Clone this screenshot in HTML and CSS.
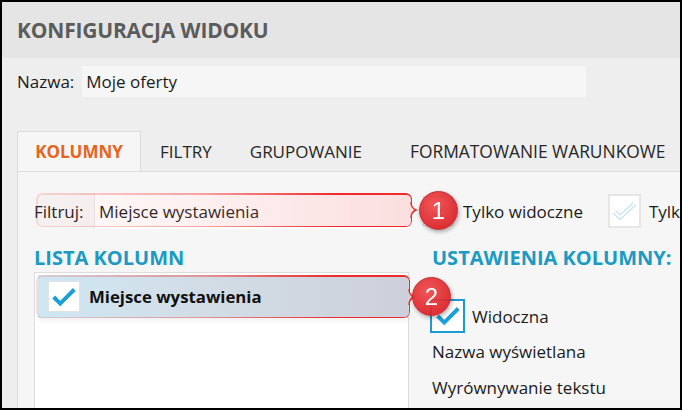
FILE: index.html
```html
<!DOCTYPE html>
<html lang="pl">
<head>
  <meta charset="UTF-8" />
  <title>Konfiguracja widoku</title>
  <link rel="stylesheet" href="styles.css">
</head>
<body>
  <div class="window">
    <!-- Title bar -->
    <header class="title-bar">
      <h1>KONFIGURACJA WIDOKU</h1>
    </header>

    <!-- View name -->
    <div class="name-row">
      <span class="label">Nazwa:</span>
      <div class="text-field name-field">Moje oferty</div>
    </div>

    <!-- Tabs -->
    <nav class="tabs">
      <span class="tab active">KOLUMNY</span>
      <span class="tab">FILTRY</span>
      <span class="tab">GRUPOWANIE</span>
      <span class="tab tab-last">FORMATOWANIE WARUNKOWE</span>
    </nav>

    <section class="tab-panel">
      <div class="filter-row">
        <span class="label">Filtruj:</span>
        <div class="text-field filter-field">Miejsce wystawienia</div>
        <span class="check hidden-check">
          <svg viewBox="0 0 32 32" width="24" height="24"><path d="M6 17l6 6 14-14" fill="none" stroke="#9a9a9a" stroke-width="2"/></svg>
        </span>
        <span class="opt-text">Tylko widoczne</span>
        <span class="check faint-check">
          <svg viewBox="0 0 32 32" width="30" height="30"><path d="M5 17l6 6 16-15" fill="none" stroke="#bfe3f3" stroke-width="5" stroke-linejoin="round"/><path d="M5 17l6 6 16-15" fill="none" stroke="#fff" stroke-width="2.4" stroke-linejoin="round"/></svg>
        </span>
        <span class="opt-text">Tylko zaznaczone</span>

        <div class="callout callout-filter">
          <svg class="brace" viewBox="0 0 8 16" width="8" height="16"><path d="M1 0 Q1 6 6 8 Q1 10 1 16" fill="#f8e4e4" stroke="#ef2a2a" stroke-width="1.4"/></svg>
        </div>
        <span class="badge badge-one">1</span>
      </div>

      <div class="columns">
        <div class="col-list">
          <h2>LISTA KOLUMN</h2>
          <div class="list-box">
            <div class="list-item selected">
              <span class="check item-check">
                <svg viewBox="0 0 32 32" width="30" height="30"><path d="M5 16l7 7 15-15" fill="none" stroke="#1a9fd9" stroke-width="4.2"/></svg>
              </span>
              <span class="item-text">Miejsce wystawienia</span>
              <div class="callout callout-item">
                <svg class="brace" viewBox="0 0 8 16" width="8" height="16"><path d="M1 0 Q1 6 6 8 Q1 10 1 16" fill="#cdd0da" stroke="#ef2a2a" stroke-width="1.4"/></svg>
              </div>
            </div>
          </div>
        </div>

        <div class="col-settings">
          <h2>USTAWIENIA KOLUMNY:</h2>
          <div class="setting check-row">
            <span class="check blue-check">
              <svg viewBox="0 0 32 32" width="30" height="30"><path d="M5 16l7 7 15-15" fill="none" stroke="#1a9fd9" stroke-width="4.2"/></svg>
            </span>
            <span>Widoczna</span>
          </div>
          <div class="setting">Nazwa wyświetlana</div>
          <div class="setting">Wyrównywanie tekstu</div>
          <span class="badge badge-two">2</span>
        </div>
      </div>
    </section>
  </div>
</body>
</html>
```

FILE: styles.css
```css
body {
  margin: 0;
  padding: 0;
  font-family: "Open Sans", "Noto Sans", sans-serif;
  color: #1b1b1b;
}

.window {
  width: 682px;
  height: 410px;
  box-sizing: border-box;
  border: 2px solid #000;
  background: #eeeeee;
  overflow: hidden;
  display: flex;
  flex-direction: column;
}

/* Title bar */
.title-bar {
  height: 56px;
  flex: none;
  background: #e5e5e5;
  display: flex;
  align-items: center;
  padding-left: 15px;
}
.title-bar h1 {
  margin: 0;
  font-size: 21px;
  font-weight: 700;
  color: #5c5c5c;
  letter-spacing: -0.2px;
}

/* Name row */
.name-row {
  display: flex;
  align-items: center;
  padding: 8px 0 0 15px;
  gap: 8px;
}
.label {
  font-size: 17px;
}
.text-field {
  box-sizing: border-box;
  display: flex;
  align-items: center;
  font-size: 17px;
  padding-left: 4px;
}
.name-field {
  width: 504px;
  height: 31px;
  background: #f6f6f6;
}

/* Tabs */
.tabs {
  display: flex;
  margin: 34px 0 0 15px;
  height: 40px;
  flex: none;
}
.tab {
  flex: none;
  display: flex;
  align-items: center;
  padding: 0 19px;
  font-size: 17px;
  color: #262626;
  white-space: nowrap;
}
.tab.tab-last {
  padding-left: 29px;
  font-size: 17.4px;
}
.tab.active {
  width: 124px;
  box-sizing: border-box;
  justify-content: center;
  padding: 0;
  background: #f6f6f6;
  border: 1px solid #dcdcdc;
  border-bottom: none;
  color: #e8641b;
  font-weight: 700;
}

.tab-panel {
  flex: 1;
  margin-left: 15px;
  background: #f6f6f6;
  border-left: 1px solid #dcdcdc;
  border-top: 1px solid #dcdcdc;
  padding: 21px 0 0 16px;
}

/* Filter row */
.filter-row {
  position: relative;
  display: flex;
  align-items: center;
  height: 36px;
}
.filter-row > * {
  flex: none;
}
.filter-row .label {
  width: 60px;
}
.filter-field {
  width: 316px;
  height: 36px;
  background: #fff;
  border-left: 1px solid #e6e6e6;
}
.check {
  box-sizing: border-box;
  display: flex;
  align-items: center;
  justify-content: center;
  background: #fff;
  flex: none;
}
.hidden-check {
  width: 30px;
  height: 30px;
  margin-left: 13px;
  border: 1px solid #d4d4d4;
}
.faint-check {
  width: 33px;
  height: 34px;
  margin-left: 25px;
  border: 2px solid #e6e6e6;
}
.opt-text {
  font-size: 17px;
  margin-left: 8px;
  white-space: nowrap;
}
.hidden-check + .opt-text {
  margin-left: 10px;
}

/* Callout highlights */
.callout {
  position: absolute;
  border-radius: 6px;
  box-sizing: border-box;
}
.callout::before {
  content: "";
  position: absolute;
  inset: 0;
  border-radius: 6px;
  padding: 1.5px;
  background: linear-gradient(to right, rgba(240, 60, 60, 0.15), rgba(240, 60, 60, 0.45) 45%, #ef2a2a 80%);
  -webkit-mask: linear-gradient(#000 0 0) content-box, linear-gradient(#000 0 0);
  -webkit-mask-composite: xor;
  mask-composite: exclude;
}
.callout .brace {
  position: absolute;
  right: -6px;
  top: 50%;
  margin-top: -8px;
}
.callout-filter {
  left: 2px;
  top: 0;
  width: 376px;
  height: 34px;
  background: linear-gradient(to right, rgba(240, 120, 120, 0.04), rgba(240, 120, 120, 0.12) 50%, rgba(240, 120, 120, 0.24));
}
.callout-item {
  left: -2px;
  top: 0;
  right: -2px;
  bottom: 0;
}

/* Badges */
.badge {
  position: absolute;
  width: 39px;
  height: 39px;
  border-radius: 50%;
  box-sizing: border-box;
  display: flex;
  align-items: center;
  justify-content: center;
  background: radial-gradient(circle at 40% 35%, #f04b4d, #dc2328 70%, #c81d22);
  border: 1px solid #c21a1e;
  box-shadow: 1px 2px 4px rgba(0, 0, 0, 0.35);
  color: #fff;
  font-family: "Liberation Sans", Arial, sans-serif;
  font-size: 24px;
  opacity: 0.93;
}
.badge-one {
  left: 385px;
  top: -2px;
}

/* Columns */
.columns {
  display: flex;
  margin-top: 17px;
}
.col-list {
  width: 375px;
  flex: none;
}
.col-settings {
  position: relative;
  margin-left: 23px;
  white-space: nowrap;
}
h2 {
  margin: 0 0 2px;
  font-size: 20px;
  font-weight: 700;
  color: #1b9bc3;
  line-height: 24px;
  white-space: nowrap;
}
.list-box {
  height: 140px;
  background: #fff;
  border: 1px solid #dddddd;
  padding: 2px 0 0 3px;
}
.list-item {
  position: relative;
  display: flex;
  align-items: center;
  height: 43px;
  background: linear-gradient(to right, #cfe7f3, #d2dde6 45%, #cdd0da);
  box-shadow: 0 3px 5px rgba(0, 0, 0, 0.06);
}
.item-check {
  width: 32px;
  height: 31px;
  margin-left: 10px;
  border: 1px solid #e2e2e2;
}
.item-text {
  margin-left: 9px;
  font-size: 16.8px;
  font-weight: 700;
  color: #111;
}

.setting {
  font-size: 17px;
  height: 36px;
  display: flex;
  align-items: center;
}
.check-row {
  margin-top: 29px;
  height: 34px;
  gap: 7px;
}
.blue-check {
  width: 35px;
  height: 34px;
  margin-left: -2px;
  border: 2px solid #1b9bd3;
}
.badge-two {
  left: -20px;
  top: 31px;
}
```
